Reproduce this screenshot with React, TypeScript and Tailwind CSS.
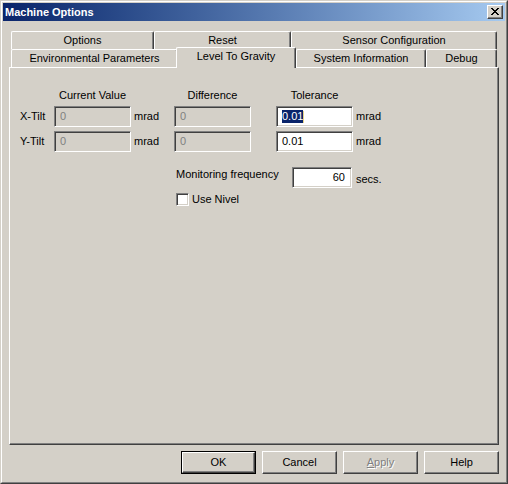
import React from "react";

const FONT = "[font-family:'Liberation_Sans',Arial,sans-serif]";

function CloseGlyph() {
  const px = [
    [0, 0], [1, 0], [6, 0], [7, 0],
    [1, 1], [2, 1], [5, 1], [6, 1],
    [2, 2], [3, 2], [4, 2], [5, 2],
    [3, 3], [4, 3],
    [2, 4], [3, 4], [4, 4], [5, 4],
    [1, 5], [2, 5], [5, 5], [6, 5],
    [0, 6], [1, 6], [6, 6], [7, 6],
  ];
  return (
    <svg width="8" height="7" viewBox="0 0 8 7" shapeRendering="crispEdges">
      {px.map(([x, y], i) => (
        <rect key={i} x={x} y={y} width="1" height="1" fill="#000" />
      ))}
    </svg>
  );
}

function Tab({ label, cls, selected }: { label: string; cls: string; selected?: boolean }) {
  if (selected) {
    return (
      <div
        className={`${cls} relative z-10 h-[21px] mb-[-1px] bg-[#d4d0c8] border-t border-l border-r border-t-white border-l-white border-r-[#404040] rounded-tl-[2px] rounded-tr-[2px] shadow-[inset_-1px_0_0_#808080] flex justify-center pt-[2px] leading-[13px]`}
      >
        {label}
      </div>
    );
  }
  return (
    <div
      className={`${cls} h-full bg-[#d4d0c8] border-t border-l border-r border-t-white border-l-white border-r-[#404040] rounded-tl-[2px] rounded-tr-[2px] shadow-[inset_-1px_0_0_#808080] flex items-center justify-center leading-[13px]`}
    >
      {label}
    </div>
  );
}

function Field({
  cls,
  children,
  disabled,
  right,
}: {
  cls: string;
  children?: React.ReactNode;
  disabled?: boolean;
  right?: boolean;
}) {
  return (
    <div
      className={`${cls} h-[21px] shrink-0 border border-t-[#808080] border-l-[#808080] border-r-white border-b-white shadow-[inset_1px_1px_0_#404040,inset_-1px_-1px_0_#d4d0c8] flex items-center leading-[13px] ${
        right ? "justify-end pr-[6px]" : "pl-[5px]"
      } ${disabled ? "bg-[#d4d0c8] text-[#808080]" : "bg-white text-black"}`}
    >
      {children}
    </div>
  );
}

function Btn({
  children,
  def,
  disabled,
}: {
  children: React.ReactNode;
  def?: boolean;
  disabled?: boolean;
}) {
  if (def) {
    return (
      <div className="w-[75px] h-[23px] border border-black">
        <div className="w-full h-full border border-t-white border-l-white border-r-[#404040] border-b-[#404040] shadow-[inset_-1px_-1px_0_#808080] flex items-center justify-center leading-[13px]">
          {children}
        </div>
      </div>
    );
  }
  return (
    <div
      className={`w-[75px] h-[23px] border border-t-white border-l-white border-r-[#404040] border-b-[#404040] shadow-[inset_-1px_-1px_0_#808080] flex items-center justify-center leading-[13px] ${
        disabled ? "text-[#808080] [text-shadow:1px_1px_0_#ffffff]" : "text-black"
      }`}
    >
      {children}
    </div>
  );
}

export default function App() {
  return (
    <div className={`${FONT} text-[11px] text-black w-[508px] h-[484px] bg-[#d4d0c8] border border-t-[#d4d0c8] border-l-[#d4d0c8] border-r-[#404040] border-b-[#404040]`}>
      <div className="w-full h-full border border-t-white border-l-white border-r-[#808080] border-b-[#808080] p-[1px]">
        {/* Title bar */}
        <div className="h-[18px] flex items-center justify-between pl-[2px] pr-[2px] bg-linear-to-r from-[#0a246a] to-[#a6caf0]">
          <span className="text-white font-bold leading-[13px]">Machine Options</span>
          <div className="w-[16px] h-[14px] bg-[#d4d0c8] border border-t-white border-l-white border-r-[#404040] border-b-[#404040] shadow-[inset_-1px_-1px_0_#808080] flex items-center justify-center pb-[1px]">
            <CloseGlyph />
          </div>
        </div>

        {/* Tab control */}
        <div className="mt-[10px] px-[6px]">
          <div className="flex h-[18px] pl-[2px]">
            <Tab label="Options" cls="w-[143px]" />
            <Tab label="Reset" cls="w-[137px]" />
            <Tab label="Sensor Configuration" cls="w-[206px]" />
          </div>
          <div className="relative z-10 flex items-end h-[18px] pl-[2px]">
            <Tab label="Environmental Parameters" cls="w-[167px] mr-[-2px]" />
            <Tab label="Level To Gravity" cls="w-[120px]" selected />
            <Tab label="System Information" cls="w-[130px]" />
            <Tab label="Debug" cls="w-[71px]" />
          </div>
          <div className="h-[378px] border border-t-white border-l-white border-r-[#404040] border-b-[#404040] shadow-[inset_-1px_-1px_0_#808080] pt-[21px] pl-[10px]">
            <div className="flex h-[13px] leading-[13px]">
              <div className="w-[34px]" />
              <div className="w-[77px] text-center">Current Value</div>
              <div className="w-[43px]" />
              <div className="w-[77px] text-center">Difference</div>
              <div className="w-[25px]" />
              <div className="w-[77px] text-center">Tolerance</div>
            </div>

            <div className="mt-[4px] flex items-center h-[21px] leading-[13px]">
              <div className="w-[34px]">X-Tilt</div>
              <Field cls="w-[77px]" disabled>0</Field>
              <div className="w-[43px] pl-[3px]">mrad</div>
              <Field cls="w-[77px]" disabled>0</Field>
              <div className="w-[25px]" />
              <Field cls="w-[77px]">
                <span className="bg-[#0a246a] text-white">0.01</span>
                <span className="w-px h-[12px] bg-[#e8d488]" />
              </Field>
              <div className="pl-[3px]">mrad</div>
            </div>

            <div className="mt-[4px] flex items-center h-[21px] leading-[13px]">
              <div className="w-[34px]">Y-Tilt</div>
              <Field cls="w-[77px]" disabled>0</Field>
              <div className="w-[43px] pl-[3px]">mrad</div>
              <Field cls="w-[77px]" disabled>0</Field>
              <div className="w-[25px]" />
              <Field cls="w-[77px]">0.01</Field>
              <div className="pl-[3px]">mrad</div>
            </div>

            <div className="mt-[15px] ml-[156px] flex h-[21px] leading-[13px]">
              <div className="w-[116px] pt-[1px]">Monitoring frequency</div>
              <Field cls="w-[60px]" right>60</Field>
              <div className="pl-[4px] pt-[6px]">secs.</div>
            </div>

            <div className="mt-[5px] ml-[156px] flex items-center h-[13px] leading-[13px]">
              <div className="w-[13px] h-[13px] bg-white border border-t-[#808080] border-l-[#808080] border-r-white border-b-white shadow-[inset_1px_1px_0_#404040,inset_-1px_-1px_0_#d4d0c8]" />
              <div className="ml-[3px]">Use Nivel</div>
            </div>
          </div>
        </div>

        {/* Buttons */}
        <div className="mt-[6px] flex justify-end gap-[6px] pr-[6px]">
          <Btn def>OK</Btn>
          <Btn>Cancel</Btn>
          <Btn disabled>
            <span>
              <span className="underline">A</span>pply
            </span>
          </Btn>
          <Btn>Help</Btn>
        </div>
      </div>
    </div>
  );
}
